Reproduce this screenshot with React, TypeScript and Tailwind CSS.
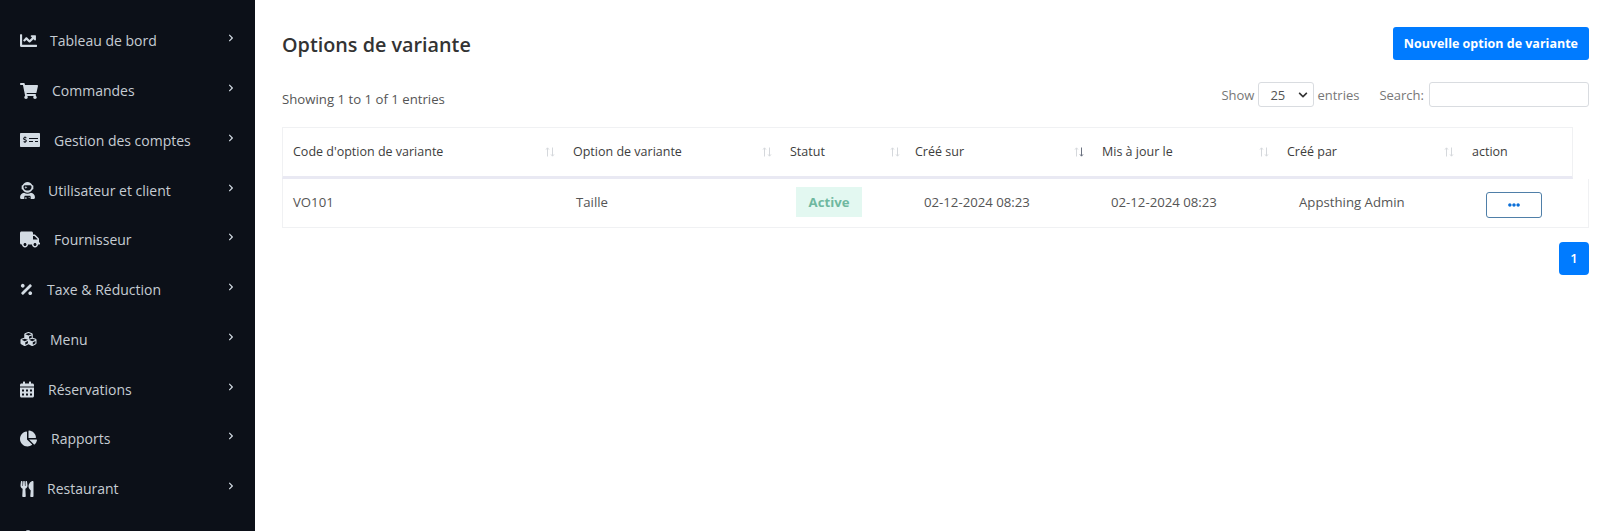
import React from 'react'
import { IconType } from 'react-icons'
import {
  FaChartLine,
  FaShoppingCart,
  FaMoneyCheckAlt,
  FaUserAstronaut,
  FaTruck,
  FaPercentage,
  FaCubes,
  FaCalendarAlt,
  FaChartPie,
  FaUtensils,
  FaChevronRight,
  FaEllipsisH,
  FaChevronDown,
  FaCog,
} from 'react-icons/fa'

interface NavItem {
  label: string
  icon: IconType
  iconClass: string
}

const navItems: NavItem[] = [
  { label: 'Tableau de bord', icon: FaChartLine, iconClass: 'w-[17px] h-[17px] mr-[13px]' },
  { label: 'Commandes', icon: FaShoppingCart, iconClass: 'w-[18px] h-[18px] mr-[14px]' },
  { label: 'Gestion des comptes', icon: FaMoneyCheckAlt, iconClass: 'w-[20px] h-[20px] mr-[14px]' },
  { label: 'Utilisateur et client', icon: FaUserAstronaut, iconClass: 'w-[15px] h-[17px] mr-[13px]' },
  { label: 'Fournisseur', icon: FaTruck, iconClass: 'w-[20px] h-[17px] mr-[14px]' },
  { label: 'Taxe & Réduction', icon: FaPercentage, iconClass: 'w-[13px] h-[15px] mr-[14px]' },
  { label: 'Menu', icon: FaCubes, iconClass: 'w-[17px] h-[16px] mr-[13px]' },
  { label: 'Réservations', icon: FaCalendarAlt, iconClass: 'w-[14px] h-[17px] mr-[14px]' },
  { label: 'Rapports', icon: FaChartPie, iconClass: 'w-[17px] h-[17px] mr-[14px]' },
  { label: 'Restaurant', icon: FaUtensils, iconClass: 'w-[14px] h-[16px] mr-[13px]' },
]

const headers = [
  { label: "Code d'option de variante", sort: 'none' },
  { label: 'Option de variante', sort: 'none' },
  { label: 'Statut', sort: 'none' },
  { label: 'Créé sur', sort: 'down' },
  { label: 'Mis à jour le', sort: 'none' },
  { label: 'Créé par', sort: 'none' },
  { label: 'action', sort: '' },
]

const SortIcon: React.FC<{ active: boolean }> = ({ active }) => (
  <svg width="10" height="10" viewBox="0 0 10 10" fill="none" strokeWidth="1" className="shrink-0">
    <path d="M2.5 9.5V1M1 2.6L2.5 .8 4 2.6" stroke="#d5d8dc" />
    <path d="M7.5 .5V9M6 7.4L7.5 9.2 9 7.4" stroke={active ? '#6b7280' : '#d5d8dc'} />
  </svg>
)

export default function App() {
  return (
    <div className="flex h-[531px] w-[1600px] overflow-hidden bg-white font-['Open_Sans',sans-serif] text-[#444]">
      <aside className="w-[255px] shrink-0 overflow-hidden bg-[#0c1018] pl-5 pr-5 pt-[16px]">
        {navItems.map((item) => {
          const Icon = item.icon
          return (
            <div key={item.label} className="flex h-[49.75px] items-center text-[14px] text-[#c6ccd3]">
              <Icon className={`${item.iconClass} shrink-0 text-[#d3dbe3]`} />
              <span className="flex-1">{item.label}</span>
              <FaChevronRight className="mb-[5px] h-[8px] w-[8px] text-[#d3dbe3]" />
            </div>
          )
        })}
        <FaCog className="mt-[16px] h-[16px] w-[16px] text-[#d3dbe3]" />
      </aside>

      <main className="flex-1 pl-[27px] pr-[11px] pt-[27px]">
        <div className="flex items-start justify-between">
          <h1 className="pt-[4px] text-[19.8px] font-semibold leading-[28px] text-[#333]">Options de variante</h1>
          <button className="h-[33px] rounded-[3px] bg-[#007bff] px-[11px] pt-[2px] text-[12.5px] font-bold text-white">
            Nouvelle option de variante
          </button>
        </div>

        <div className="mt-[22px] flex h-[25px] items-start justify-between text-[13.2px] leading-[18px] text-[#777]">
          <span className="pt-[8px] text-[#555]">Showing 1 to 1 of 1 entries</span>
          <div className="flex items-center text-[13px]">
            <span>Show</span>
            <div className="ml-[4px] mr-[3px] flex h-[25px] w-[56px] items-center justify-between rounded-[3px] border border-[#d9dce0] pl-[11px] pr-[5px] text-[#555]">
              25
              <FaChevronDown className="h-[10px] w-[10px] text-[#333]" />
            </div>
            <span>entries</span>
            <span className="ml-[20px]">Search:</span>
            <input className="ml-[5px] h-[25px] w-[160px] rounded-[3px] border border-[#d9dce0] bg-white" />
          </div>
        </div>

        <div className="mt-[20px] grid h-[52px] w-[1291px] grid-cols-[279px_217px_125px_187px_185px_185px_113px] border border-b-[3px] border-[#f0f1f3] border-b-[#e9e9f3] text-[12.5px] font-medium text-[#3d3d3d]">
          {headers.map((h, i) => (
            <div
              key={h.label}
              className={`flex items-center justify-between ${i === 0 ? 'pl-[10px]' : 'pl-[11px]'} ${i === 2 ? 'pr-[4px]' : 'pr-[7px]'}`}
            >
              <span>{h.label}</span>
              {h.sort && <SortIcon active={h.sort === 'down'} />}
            </div>
          ))}
        </div>

        <div className="grid h-[49px] w-[1307px] grid-cols-[282px_220px_128px_187px_188px_187px_115px] items-center border border-t-0 border-[#f0f1f3] text-[13.2px] text-[#555]">
          <div className="pl-[10px]">VO101</div>
          <div className="pl-[11px]">Taille</div>
          <div className="pl-[11px]">
            <span className="mb-[3px] flex h-[30px] w-[66px] items-center justify-center bg-[#e3f8f1] pt-[2px] font-bold text-[#6fb8a0]">
              Active
            </span>
          </div>
          <div className="pl-[11px]">02-12-2024 08:23</div>
          <div className="pl-[11px]">02-12-2024 08:23</div>
          <div className="pl-[11px]">Appsthing Admin</div>
          <div className="pl-[11px]">
            <button className="mt-[3px] flex h-[26px] w-[56px] items-center justify-center rounded-[3px] border border-[#4f7fa8] bg-white">
              <FaEllipsisH className="h-[12px] w-[12px] text-[#0b6fd8]" />
            </button>
          </div>
        </div>

        <div className="mt-[14px] flex justify-end">
          <span className="flex h-[33px] w-[30px] items-center justify-center rounded-[4px] bg-[#007bff] text-[13px] font-semibold text-white">
            1
          </span>
        </div>
      </main>
    </div>
  )
}
